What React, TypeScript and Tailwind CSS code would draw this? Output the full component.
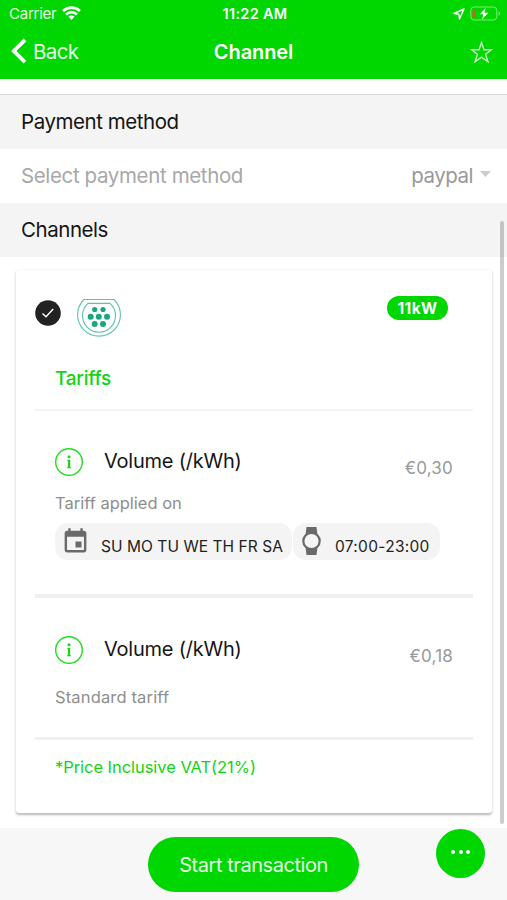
import React from 'react';
import { MdEvent } from 'react-icons/md';

function StatusBar() {
  return (
    <div className="flex h-[28px] items-center pl-[9px] pr-[6px]">
      <div className="flex flex-1 items-center gap-[6px]">
        <span className="text-[15px] leading-[28px] tracking-[-0.25px] opacity-90">Carrier</span>
        <svg className="-mt-[2px]" width="19" height="15" viewBox="0 0 19 15" fill="none" stroke="#fff" strokeWidth="2.700">
          <path d="M1 5C6 .5 13 .5 18 5" />
          <path d="M4 8.600c3.400-3 7.600-3 11 0" />
          <path d="M6.400 10.600c1.900-1.500 4.300-1.500 6.200 0L9.500 14z" fill="#fff" stroke="none" />
        </svg>
      </div>
      <span className="text-[14.500px] font-semibold leading-[28px] tracking-[0.3px]">11:22 AM</span>
      <div className="flex flex-1 items-center justify-end gap-[5px]">
        <svg width="12" height="12" viewBox="0 0 12 12" fill="none" stroke="#fff" strokeWidth="1.400" strokeLinejoin="round">
          <path d="M11 1 1 5.500l4.800.7.700 4.800z" />
        </svg>
        <svg className="-mt-[2px]" width="31" height="15" viewBox="0 0 31 15">
          <rect x=".8" y="1" width="26" height="13" rx="3.500" fill="none" stroke="#7bee7b" strokeWidth="1" />
          <path d="M28.600 5.300c2 1 2 3.400 0 4.400z" fill="#7bee7b" />
          <rect x="2.500" y="3" width="3.500" height="9" rx="1" fill="#b3701d" />
          <path d="M15.800 1.800 9.800 8.300h3.700l-1.500 5.200 6.300-6.700h-3.900z" fill="#fff" />
        </svg>
      </div>
    </div>
  );
}

function NavBar() {
  return (
    <div className="flex h-[48px] items-center pl-[11px] pr-[14px]">
      <div className="flex flex-1 items-center gap-[6px]">
        <svg className="-mt-[2px]" width="16" height="26" viewBox="0 0 16 26" fill="none" stroke="#fff" strokeWidth="3.800">
          <path d="M14 1.800 2.800 13 14 24.200" />
        </svg>
        <span className="text-[20.500px] leading-[48px] tracking-[-0.6px] opacity-90">Back</span>
      </div>
      <span className="ml-[3px] text-[20px] font-semibold leading-[48px] tracking-[-0.1px]">Channel</span>
      <div className="flex flex-1 justify-end">
        <svg width="23" height="22" viewBox="0 0 23 22" fill="none" stroke="#c6fac6" strokeWidth="1.400">
          <path d="m11.500 1.500 2.500 7.200h7.700l-6.200 4.600 2.400 7.400-6.400-4.500-6.400 4.500 2.400-7.400-6.200-4.600H9z" />
        </svg>
      </div>
    </div>
  );
}

function SectionTitle({ children }: { children: string }) {
  return (
    <div className="h-[54px] bg-[#f4f4f4] pl-[21px] text-[20.500px] leading-[54px] tracking-[-0.450px] text-[#151515]">
      {children}
    </div>
  );
}

function Type2Plug() {
  return (
    <svg width="44" height="40" viewBox="0 0 44 40" fill="none" stroke="#5cc3a4" strokeWidth="1.100">
      <path d="M7 1.500H37a21.400 21.400 0 1 1-30 0z" />
      <path d="M11 5.400h22a16.500 16.500 0 1 1-22 0z" />
      <g fill="#18a77c" stroke="none">
        <circle cx="17.700" cy="11.500" r="2.600" />
        <circle cx="26" cy="11.500" r="2.600" />
        <circle cx="13.700" cy="18.700" r="3" />
        <circle cx="21.800" cy="18.700" r="3" />
        <circle cx="30" cy="18.700" r="3" />
        <circle cx="17.700" cy="26" r="3" />
        <circle cx="26" cy="26" r="3" />
      </g>
    </svg>
  );
}

function InfoIcon() {
  return (
    <svg className="mt-[1px]" width="28" height="28" viewBox="0 0 28 28" fill="none">
      <circle cx="14" cy="14" r="13.300" stroke="#22dc22" strokeWidth="1.400" />
      <circle cx="14" cy="8.800" r="1.500" fill="#16d916" />
      <path d="M12.200 11.700h3v7.600h.8v1h-3.900v-1h.8v-6.600h-.7z" fill="#16d916" />
    </svg>
  );
}

function PriceRow({ price }: { price: string }) {
  return (
    <div className="flex h-[30px] items-start pl-[39px] pr-[39px]">
      <InfoIcon />
      <span className="ml-[21px] text-[20px] leading-[28px] tracking-[-0.220px] text-[#151515]">Volume (/kWh)</span>
      <span className="ml-auto pt-[7px] text-[17px] leading-[28px] tracking-[0.2px] text-[#999]">{price}</span>
    </div>
  );
}

function ChannelCard() {
  return (
    <div className="ml-[16px] h-[543px] w-[476px] rounded-[3px] bg-white shadow-[0_1.5px_2.5px_rgba(0,0,0,0.28)]">
      <div className="flex h-[94px] items-start pl-[19px] pr-[44px]">
        <svg className="mt-[30px]" width="26" height="26" viewBox="0 0 26 26">
          <circle cx="13" cy="13" r="12.800" fill="#222" />
          <path d="m7.500 13.500 3.500 3.300 7.200-7.800" fill="none" stroke="#fff" strokeWidth="1.400" />
        </svg>
        <div className="ml-[16px] mt-[28px]"><Type2Plug /></div>
        <span className="ml-auto mt-[26px] h-[24px] w-[61px] rounded-full bg-[#00d600] text-center text-[15.500px] font-bold leading-[25px] tracking-[0.4px] text-white">11kW</span>
      </div>
      <div className="h-[45px] pl-[39px] text-[19px] font-medium leading-[29px] tracking-[-0.250px] text-[#12d412]">Tariffs</div>
      <div className="mx-[19px] h-[2px] bg-[#f4f4f4]" />
      <div className="h-[183px] pt-[36px]">
        <PriceRow price="€0,30" />
        <div className="h-[46px] pl-[39px] pt-[12px] text-[16.500px] leading-[28px] text-[#8e8e8e]">Tariff applied on</div>
        <div className="flex gap-px pl-[39px] text-[15.500px] text-[#222]">
          <div className="flex h-[37px] w-[237px] items-start rounded-[13px] bg-[#f4f4f4] pl-[6px]">
            <MdEvent className="mt-[4px]" size={29} color="#6a6a6a" />
            <span className="ml-[11px] whitespace-nowrap pt-[10px] leading-[28px] tracking-[0.050px]">SU MO TU WE TH FR SA</span>
          </div>
          <div className="flex h-[37px] w-[147px] items-start rounded-[13px] bg-[#f4f4f4] pl-[9px]">
            <svg className="mt-[4px]" width="19" height="28" viewBox="0 0 19 28">
              <path d="M4.500 0h10l1 8h-12zM3.500 20h12l-1 8h-10z" fill="#6a6a6a" />
              <circle cx="9.500" cy="14" r="8.200" fill="#f4f4f4" stroke="#6a6a6a" strokeWidth="2.200" />
            </svg>
            <span className="ml-[14px] whitespace-nowrap pt-[10px] leading-[28px] tracking-[0.3px]">07:00-23:00</span>
          </div>
        </div>
      </div>
      <div className="mx-[19px] h-[4px] bg-[#f0f0f0]" />
      <div className="h-[139px] pt-[37px]">
        <PriceRow price="€0,18" />
        <div className="pl-[39px] pt-[18px] text-[16.500px] leading-[28px] tracking-[0.150px] text-[#8e8e8e]">Standard tariff</div>
      </div>
      <div className="mx-[19px] h-[3px] bg-[#f0f0f0]" />
      <div className="pl-[39px] pt-[13px] text-[16.500px] leading-[28px] tracking-[-0.050px] text-[#12d412]">*Price Inclusive VAT(21%)</div>
    </div>
  );
}

export default function App() {
  return (
    <div className="relative flex h-[900px] w-[507px] flex-col overflow-hidden bg-white font-['Inter',sans-serif]">
      <header className="h-[79px] bg-[#00d600] text-white">
        <StatusBar />
        <NavBar />
      </header>
      <div className="h-[16px] border-b border-[#d5d5d5]" />
      <SectionTitle>Payment method</SectionTitle>
      <div className="flex h-[54px] items-center pl-[21px] pr-[16px] text-[20.500px] leading-[54px]">
        <span className="tracking-[-0.370px] text-[#a8a8a8]">Select payment method</span>
        <span className="ml-auto tracking-[-0.5px] text-[#999]">paypal</span>
        <svg className="mb-[5px] ml-[7px]" width="11" height="6" viewBox="0 0 11 6">
          <path d="M0 0h11L5.500 6z" fill="#ccc" />
        </svg>
      </div>
      <SectionTitle>Channels</SectionTitle>
      <main className="h-[571px] pt-[13px]">
        <ChannelCard />
      </main>
      <footer className="flex h-[72px] items-start bg-[#f7f7f7] pl-[148px]">
        <button className="mt-[9px] h-[55px] w-[211px] rounded-full bg-[#00d600] pt-px text-[20px] tracking-[-0.450px] text-[#e6ffe6]">Start transaction</button>
        <button className="ml-[77px] mt-[1px] flex h-[49px] w-[49px] items-center justify-center gap-[3.500px] rounded-full bg-[#00d600] pb-[3px]">
          <i className="h-[4px] w-[4px] rounded-full bg-white" />
          <i className="h-[4px] w-[4px] rounded-full bg-white" />
          <i className="h-[4px] w-[4px] rounded-full bg-white" />
        </button>
      </footer>
      <div className="absolute left-[500px] top-[221px] h-[603px] w-[3.500px] rounded-full bg-black/20" />
    </div>
  );
}
